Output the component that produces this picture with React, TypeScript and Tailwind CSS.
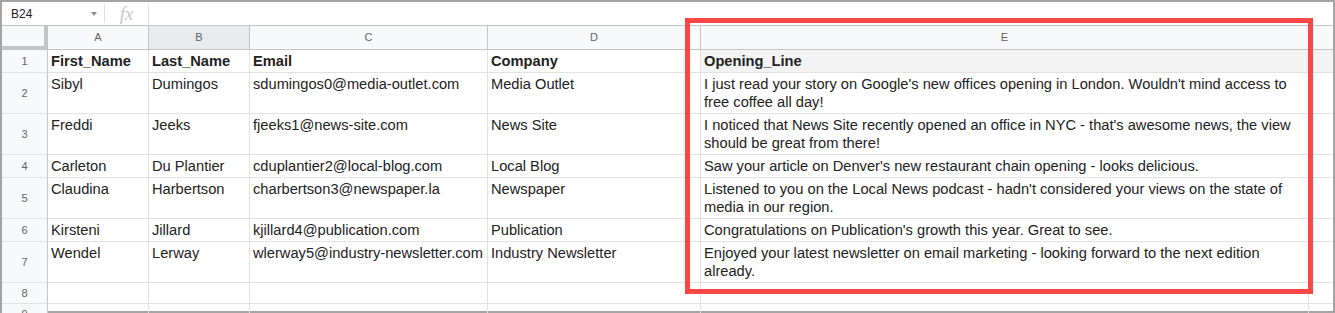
import React from "react";

const colWidths = [101, 101, 238, 213, 608];
const colLetters = ["A", "B", "C", "D", "E"];

type Row = { n: number; h: number; cells: (string | string[])[]; bold?: boolean };

const rows: Row[] = [
  { n: 1, h: 23, bold: true, cells: ["First_Name", "Last_Name", "Email", "Company", "Opening_Line"] },
  {
    n: 2,
    h: 41,
    cells: [
      "Sibyl",
      "Dumingos",
      "sdumingos0@media-outlet.com",
      "Media Outlet",
      ["I just read your story on Google's new offices opening in London. Wouldn't mind access to", "free coffee all day!"],
    ],
  },
  {
    n: 3,
    h: 41,
    cells: [
      "Freddi",
      "Jeeks",
      "fjeeks1@news-site.com",
      "News Site",
      ["I noticed that News Site recently opened an office in NYC - that's awesome news, the view", "should be great from there!"],
    ],
  },
  {
    n: 4,
    h: 23,
    cells: ["Carleton", "Du Plantier", "cduplantier2@local-blog.com", "Local Blog", "Saw your article on Denver's new restaurant chain opening - looks delicious."],
  },
  {
    n: 5,
    h: 41,
    cells: [
      "Claudina",
      "Harbertson",
      "charbertson3@newspaper.la",
      "Newspaper",
      ["Listened to you on the Local News podcast - hadn't considered your views on the state of", "media in our region."],
    ],
  },
  {
    n: 6,
    h: 23,
    cells: ["Kirsteni", "Jillard", "kjillard4@publication.com", "Publication", "Congratulations on Publication's growth this year. Great to see."],
  },
  {
    n: 7,
    h: 41,
    cells: [
      "Wendel",
      "Lerway",
      "wlerway5@industry-newsletter.com",
      "Industry Newsletter",
      ["Enjoyed your latest newsletter on email marketing - looking forward to the next edition", "already."],
    ],
  },
  { n: 8, h: 21, cells: ["", "", "", "", ""] },
  { n: 9, h: 21, cells: ["", "", "", "", ""] },
];

function CellText({ value }: { value: string | string[] }) {
  const lines = Array.isArray(value) ? value : [value];
  return (
    <>
      {lines.map((l, i) => (
        <div key={i} className="whitespace-nowrap">
          {l}
        </div>
      ))}
    </>
  );
}

export default function App() {
  return (
    <div className="relative w-[1335px] h-[313px] overflow-hidden bg-white font-['Liberation_Sans',Arial,sans-serif]">
      <div className="h-full border-2 border-[#a4a4a4] flex flex-col">
        {/* Formula bar */}
        <div className="flex items-center h-[24px] shrink-0 border-b border-[#c4c4c4] bg-white">
          <div className="w-[102px] flex items-center justify-between pl-[9px] pr-[7px] text-[12px] text-[#202124]">
            <span>B24</span>
            <span className="w-0 h-0 border-l-[3px] border-r-[3px] border-t-[4px] border-l-transparent border-r-transparent border-t-[#8a8a8a]" />
          </div>
          <div className="w-px h-[19px] bg-[#e0e0e0]" />
          <div className="w-[43px] flex justify-center text-[19px] italic leading-none text-[#c8c8c8] font-['Liberation_Serif',serif]">
            fx
          </div>
          <div className="w-px h-[19px] bg-[#e0e0e0]" />
        </div>

        {/* Column headers */}
        <div className="flex h-[24px] shrink-0 border-b border-[#c4c4c4] bg-[#f8f9fa] text-[11px] text-[#5f6368]">
          <div className="w-[46px] shrink-0 border-r border-[#c4c4c4] relative">
            <div className="absolute right-0 top-0 bottom-0 w-[3px] bg-[#c4c4c4]" />
            <div className="absolute left-0 right-0 bottom-0 h-[3px] bg-[#c4c4c4]" />
          </div>
          {colWidths.map((w, i) => (
            <div
              key={i}
              style={{ width: w }}
              className={`shrink-0 flex items-center justify-center border-r border-[#c4c4c4] ${i === 1 ? "bg-[#e8eaed]" : ""}`}
            >
              {colLetters[i]}
            </div>
          ))}
          <div className="flex-1" />
        </div>

        {/* Rows */}
        {rows.map((r) => (
          <div key={r.n} style={{ height: r.h }} className="flex shrink-0">
            <div className="w-[46px] shrink-0 flex items-center justify-center border-r border-b border-r-[#c4c4c4] border-b-[#e2e2e2] bg-[#f8f9fa] text-[11px] text-[#5f6368]">
              {r.n}
            </div>
            {r.cells.map((c, i) => (
              <div
                key={i}
                style={{ width: colWidths[i] }}
                className={`shrink-0 overflow-hidden border-r border-b border-[#e2e2e2] pl-[3px] pt-[2px] text-[11pt] leading-[18px] text-[#222222] ${
                  r.bold ? "font-bold" : ""
                } ${r.n === 1 && i === 4 ? "bg-[#f3f3f3]" : ""}`}
              >
                <CellText value={c} />
              </div>
            ))}
            <div className={`flex-1 border-b border-[#e2e2e2] ${r.n === 1 ? "bg-[#f3f3f3]" : ""}`} />
          </div>
        ))}
      </div>

      {/* Highlight box */}
      <div className="absolute left-[685px] top-[18px] w-[628px] h-[276px] border-[5px] border-[#ff4646]" />
    </div>
  );
}
